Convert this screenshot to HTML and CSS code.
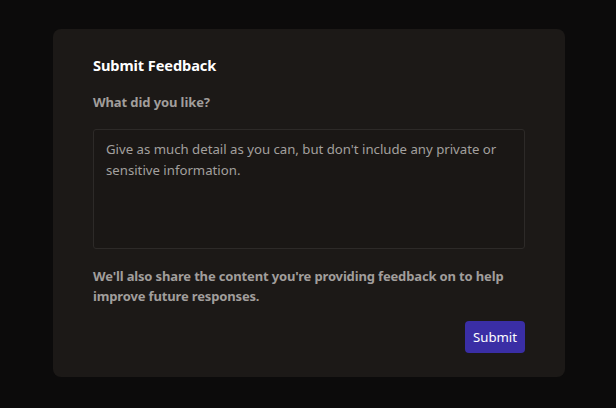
FILE: index.html
```html
<!DOCTYPE html>
<html>
<head>
<meta charset="utf-8">
<link rel="stylesheet" href="styles.css">
</head>
<body>
<div class="page">
  <div class="card">
    <h2 class="title">Submit Feedback</h2>
    <div class="label">What did you like?</div>
    <div class="textarea">Give as much detail as you can, but don't include any private or sensitive information.</div>
    <p class="notice">We'll also share the content you're providing feedback on to help improve future responses.</p>
    <div class="actions"><button class="submit">Submit</button></div>
  </div>
</div>
</body>
</html>
```
FILE: styles.css
```css
html, body {
  margin: 0;
  padding: 0;
  background: #0c0b0b;
  width: 616px;
  height: 408px;
  overflow: hidden;
  font-family: "Noto Sans", "Open Sans", sans-serif;
}
.page {
  padding: 29px 51px 0 53px;
}
.card {
  background: #1c1917;
  border-radius: 8px;
  height: 348px;
  box-sizing: border-box;
  padding: 25px 40px 24px 40px;
  display: flex;
  flex-direction: column;
}
.title {
  margin: 0;
  font-size: 14.6px;
  font-weight: 700;
  color: #ffffff;
  line-height: 22px;
  letter-spacing: -0.1px;
}
.label {
  margin-top: 16px;
  font-size: 13px;
  font-weight: 700;
  color: #a19e9c;
  line-height: 20px;
  letter-spacing: -0.1px;
}
.textarea {
  margin-top: 17px;
  height: 120px;
  box-sizing: border-box;
  border: 1px solid #2d2a28;
  border-radius: 3px;
  background: #1a1715;
  padding: 9px 12px;
  font-size: 13.2px;
  line-height: 21px;
  color: #a3a09e;
}
.notice {
  margin: 17px 0 0 0;
  font-size: 13px;
  font-weight: 700;
  color: #a19e9c;
  line-height: 20px;
  letter-spacing: -0.15px;
}
.actions {
  margin-top: auto;
  display: flex;
  justify-content: flex-end;
}
.submit {
  background: #3a2ea5;
  color: #ffffff;
  border: none;
  border-radius: 4px;
  width: 60px;
  height: 32px;
  font-family: inherit;
  font-size: 13.2px;
  padding: 0;
}
```
